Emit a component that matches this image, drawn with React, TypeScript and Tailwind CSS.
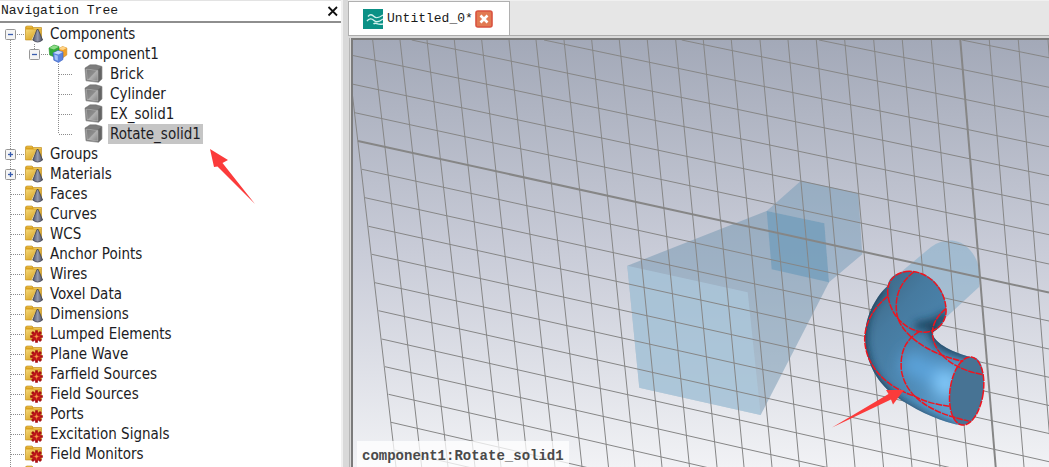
import React, { useState } from 'react';

type IconKind = 'folder' | 'source' | 'group' | 'solid';
type Guide = 'line' | 'blank' | 'first' | 'tee' | 'end';

interface TreeNode {
  label: string;
  icon: IconKind;
  guides: Guide[];
  toggle?: 'open' | 'closed';
}

const NODES: TreeNode[] = [
  { label: 'Components', icon: 'folder', guides: ['first'], toggle: 'open' },
  { label: 'component1', icon: 'group', guides: ['line', 'end'], toggle: 'open' },
  { label: 'Brick', icon: 'solid', guides: ['line', 'blank', 'tee'] },
  { label: 'Cylinder', icon: 'solid', guides: ['line', 'blank', 'tee'] },
  { label: 'EX_solid1', icon: 'solid', guides: ['line', 'blank', 'tee'] },
  { label: 'Rotate_solid1', icon: 'solid', guides: ['line', 'blank', 'end'] },
  { label: 'Groups', icon: 'folder', guides: ['tee'], toggle: 'closed' },
  { label: 'Materials', icon: 'folder', guides: ['tee'], toggle: 'closed' },
  { label: 'Faces', icon: 'folder', guides: ['tee'] },
  { label: 'Curves', icon: 'folder', guides: ['tee'] },
  { label: 'WCS', icon: 'folder', guides: ['tee'] },
  { label: 'Anchor Points', icon: 'folder', guides: ['tee'] },
  { label: 'Wires', icon: 'folder', guides: ['tee'] },
  { label: 'Voxel Data', icon: 'folder', guides: ['tee'] },
  { label: 'Dimensions', icon: 'folder', guides: ['tee'] },
  { label: 'Lumped Elements', icon: 'source', guides: ['tee'] },
  { label: 'Plane Wave', icon: 'source', guides: ['tee'] },
  { label: 'Farfield Sources', icon: 'source', guides: ['tee'] },
  { label: 'Field Sources', icon: 'source', guides: ['tee'] },
  { label: 'Ports', icon: 'source', guides: ['tee'] },
  { label: 'Excitation Signals', icon: 'source', guides: ['tee'] },
  { label: 'Field Monitors', icon: 'source', guides: ['tee'] },
  { label: '', icon: 'source', guides: ['tee'] },
];

// Working plane, rows as [x1, y1, y at the right edge]
const ROWS: [number, number, number][] = [
  [962, 40, 57.7], [819, 40, 87.3], [681.7, 40, 117], [544, 40, 146.7], [411.7, 40, 175.7],
  [352, 55.3, 205], [352, 84, 234.7], [354, 112.5, 264], [358, 141, 292.5], [362, 169.3, 321],
  [365, 197.7, 349], [368.5, 226.3, 377.3], [371.8, 254.3, 405.5], [375, 282.7, 433.5],
  [378.5, 310.7, 461.7], [381.7, 339, 490], [385, 366.7, 518], [388.5, 394.3, 546],
  [391, 422.3, 574], [394.6, 450, 602],
];

// Columns as [x at the top, x at the bottom]
const COLS: [number, number][] = [
  [346, 396], [372.7, 421.7], [400, 448], [427, 475], [454.3, 501], [481.7, 528], [509, 555],
  [536, 582], [564, 608.5], [591.7, 635], [619.3, 662], [647.3, 689.5], [675.7, 717],
  [703.3, 744], [731.3, 772], [760, 799.5], [788, 827], [816.3, 855], [844.7, 883.5],
  [873.7, 912], [902.3, 940], [931.3, 967.7], [960.3, 995.7], [989.3, 1024], [1018.3, 1052],
  [1048, 1080],
];

const MAIN_ROW = 8;
const MAIN_COL = 22;

const BEND =
  'M203 197 C172 226 136 282 135 350 C136 432 176 492 226 528 C280 566 345 598 400 611 C440 625 476 590 489 512 C496 455 484 408 455 412 C405 399 342 372 337 338 C366 322 381 292 378 265 C376 200 326 154 268 154 C236 154 206 170 203 197 Z';

const GuideCell: React.FC<{ kind: Guide; toggle?: 'open' | 'closed' }> = ({ kind, toggle }) => {
  const top = kind === 'line' || kind === 'tee' || kind === 'end';
  const bottom = kind === 'line' || kind === 'tee' || kind === 'first';
  const branch = kind !== 'line' && kind !== 'blank';
  return (
    <svg width="24" height="20" viewBox="0 0 24 20" className="shrink-0" aria-hidden="true">
      <g stroke="#8c8c8c" strokeDasharray="1 1" fill="none">
        {top && <path d="M10.500 0V10" />}
        {bottom && <path d="M10.500 10V20" />}
        {branch && <path d="M11 10.500H24" />}
      </g>
      {toggle && (
        <>
          <rect x="5.500" y="5.500" width="10" height="10" rx="1" fill="#f4f4f4" stroke="#979797" />
          <path d="M8 10.500H13" stroke="#3a5dae" strokeWidth="1.300" />
          {toggle === 'closed' && <path d="M10.500 8V13" stroke="#3a5dae" strokeWidth="1.300" />}
        </>
      )}
    </svg>
  );
};

const Folder: React.FC = () => (
  <>
    <path d="M1.500 15.500V3L2.500 2H8L9.500 3.500H17.500V16H1.500Z" fill="#d9a01c" stroke="#c08f22" strokeWidth=".6" />
    <path d="M2 5.500H17V15.500H2Z" fill="url(#folderFront)" />
    <path d="M2.500 3H8M9.500 4.500H17" stroke="#f3cd62" strokeWidth=".8" />
  </>
);

const NodeIcon: React.FC<{ kind: IconKind }> = ({ kind }) => (
  <svg width="20" height="20" viewBox="0 0 20 20" className="shrink-0" aria-hidden="true">
    {kind === 'folder' && (
      <>
        <Folder />
        <path d="M11 9L7.500 15.500L10 17.500Z" fill="#f6f0dd" opacity=".8" />
        <path d="M13 5.500L8.800 16Q13.500 20 18.600 16L14.200 5.500Z" fill="url(#cone)" stroke="#3e4150" strokeWidth=".8" />
      </>
    )}
    {kind === 'source' && (
      <>
        <Folder />
        <g stroke="#a80f14" strokeWidth="2.700">
          <path d="M12.500 6.200V18.800M6.200 12.500H18.800M8 8L17 17M17 8L8 17" />
        </g>
        <circle cx="12.500" cy="12.500" r="4.300" fill="#bd1519" />
        <path d="M12.500 9.500V15.500M9.500 12.500H15.500" stroke="#e0602a" strokeWidth=".8" />
        <circle cx="12.500" cy="12.500" r="1.300" fill="#f3a04a" />
      </>
    )}
    {kind === 'group' && (
      <>
        <path d="M10.500 5L14.500 2.500L18.800 4V11L14.500 14L10.500 12Z" fill="#f0a02a" stroke="#cf8a1c" strokeWidth=".6" />
        <path d="M10.500 5L14.500 2.500L18.800 4L15 6Z" fill="#ffd487" />
        <path d="M1 4L6 1L11 2.500V9L6.500 13L1.700 11Z" fill="#33ab38" stroke="#23902a" strokeWidth=".6" />
        <path d="M1.200 4L6 5.500L10.800 2.700L6 1.200Z" fill="#8edc88" />
        <path d="M5 9L10 6.500L15 8V15.500L10.500 18.500L5.800 16.200Z" fill="#5c84dc" stroke="#3c62c4" strokeWidth=".6" />
        <path d="M5.200 9L10 6.700L14.800 8L10.500 10.500Z" fill="#c6d9ff" />
        <path d="M6.400 10.600L9.800 11.700V16.700L6.900 15.400Z" fill="#a3c0f7" />
      </>
    )}
    {kind === 'solid' && (
      <>
        <path d="M1 4L6 .8H12L18 2.500V15L14.500 18.300L2 16.800Z" fill="#646464" stroke="#8f8f8f" strokeWidth=".7" />
        <path d="M1.500 4.300L6.200 1.300H12L17.500 2.800L14 5.800Z" fill="#7c7c7c" />
        <path d="M2.300 5L13.800 6.400V17L3 15.700Z" fill="url(#solidFront)" stroke="#bdbdbd" strokeWidth=".6" />
      </>
    )}
  </svg>
);

const NavigationTree: React.FC = () => {
  const [selected, setSelected] = useState('Rotate_solid1');

  return (
    <aside className="w-[343px] shrink-0 flex flex-col pr-0.5 bg-[#f0f0f0] overflow-hidden">
      <header className="h-[23px] shrink-0 flex items-end justify-between border-t border-t-[#e3e3e3] border-b-2 border-b-[#8e8e8e] bg-white pl-px pr-0.5 font-['Liberation_Mono',monospace]">
        <h2 className="text-[13px] leading-5 text-[#1a1a1a]">Navigation Tree</h2>
        <button aria-label="Close navigation tree" className="w-3 h-3 mb-1">
          <svg width="12" height="12" viewBox="0 0 12 12">
            <path d="M1.500 2L10 10.500M10 2L1.500 10.500" stroke="#111" strokeWidth="1.800" />
          </svg>
        </button>
      </header>
      <ul className="flex-1 pt-px bg-white font-['DejaVu_Sans_Condensed','DejaVu_Sans',sans-serif] text-[15px] text-[#1c1c24]">
        {NODES.map((node, i) => (
          <li key={i} className="flex h-5 items-center">
            {node.guides.map((g, j) => (
              <GuideCell key={j} kind={g} toggle={j === node.guides.length - 1 ? node.toggle : undefined} />
            ))}
            {node.icon === 'solid' && <span className="w-3 shrink-0" />}
            <NodeIcon kind={node.icon} />
            <button
              onClick={() => setSelected(node.label)}
              className={
                selected === node.label
                  ? 'ml-1 px-0.5 h-5 leading-5 whitespace-nowrap bg-[#c5c5c5]'
                  : 'ml-1 px-0.5 h-5 leading-5 whitespace-nowrap'
              }
            >
              {node.label}
            </button>
          </li>
        ))}
      </ul>
    </aside>
  );
};

const Scene: React.FC = () => (
  <svg viewBox="353 40 696 427" preserveAspectRatio="xMinYMin slice" className="block w-full h-full" role="img" aria-label="3D view">
    <defs>
      <linearGradient id="pipe" x1="140" y1="260" x2="440" y2="520" gradientUnits="userSpaceOnUse">
        <stop offset="0" stopColor="#3f6c8c" />
        <stop offset=".2" stopColor="#467a9f" />
        <stop offset=".6" stopColor="#4c86b0" />
        <stop offset="1" stopColor="#5c9dce" />
      </linearGradient>
      <clipPath id="bendClip"><path d={BEND} /></clipPath>
      <filter id="soft" x="-50%" y="-50%" width="200%" height="200%"><feGaussianBlur stdDeviation="13" /></filter>
      <filter id="softer" x="-80%" y="-80%" width="260%" height="260%"><feGaussianBlur stdDeviation="24" /></filter>
    </defs>

    {/* horn and waveguide */}
    <path d="M766.700 211L801 180.700L858.300 193.300L862.300 254.300L829 282.300L824.300 223.300Z" fill="#7199b6" opacity=".48" />
    <path d="M627.300 265.700L766.700 211L824.300 223.300L829 282.300L760.700 415L639.300 387.700Z" fill="#6d93ad" opacity=".48" />
    <path d="M627.300 265.700L747.700 292.300L760.700 415L639.300 387.700Z" fill="#adcbde" opacity=".65" />
    <path d="M766.700 211L824.300 223.300L829 282.300L771.700 269.300Z" fill="#6e9bba" opacity=".7" />
    {/* cylinder */}
    <path d="M901 272L931 247C944 238 958 239 967 247C977 256 982 270 979 287L940 323Z" fill="#8fb2cc" opacity=".68" />

    <g stroke="#868686" fill="none">
      {ROWS.map(([x, y, right], i) => (
        <line key={i} x1={x} y1={y} x2="1049" y2={right} strokeWidth={i === MAIN_ROW ? 2 : 1} />
      ))}
      {COLS.map(([top, bottom], i) => (
        <line key={i} x1={top} y1="40" x2={bottom} y2="467" strokeWidth={i === MAIN_COL ? 2 : 1} />
      ))}
    </g>

    {/* selected bend */}
    <g transform="translate(820 220) scale(.33333)" fill="none">
      <path d={BEND} fill="url(#pipe)" />
      <g clipPath="url(#bendClip)">
        <g filter="url(#soft)">
          <path d="M185 200C120 270 108 360 145 445C185 535 280 590 410 632" stroke="#16364d" strokeWidth="28" />
          <path d="M285 318C325 318 352 305 385 285" stroke="#1b3d56" strokeWidth="26" opacity=".9" />
          <path d="M340 318C335 372 400 396 465 402" stroke="#1b3d56" strokeWidth="28" />
        </g>
        <g filter="url(#softer)">
          <path d="M250 420L400 490" stroke="#5ba3da" strokeWidth="70" />
          <ellipse cx="378" cy="492" rx="34" ry="40" fill="#86ceff" />
        </g>
      </g>
      <ellipse cx="440" cy="513" rx="50" ry="103" transform="rotate(8 440 513)" fill="#477394" />
      <g stroke="#f0141e" strokeWidth="4.500" strokeDasharray="20 3">
        <ellipse cx="440" cy="513" rx="50" ry="103" transform="rotate(8 440 513)" />
        <path d="M268 154C228 154 202 182 203 215C206 285 258 334 315 337C358 334 381 302 378 265C374 205 326 154 268 154Z" />
        <path d="M281 156C240 188 222 230 231 285C242 338 315 400 430 424" />
        <path d="M378 266C346 290 331 325 340 358C350 410 415 452 490 464" />
        <path d="M203 229C164 260 134 306 134 360C138 445 205 503 285 529C320 548 355 554 388 559" />
        <path d="M298 334C254 362 240 398 244 450C256 530 330 578 446 603" />
      </g>
    </g>
    <path d="M904 390L886 390L888.500 394L832 427.500L891 399.500L893 404.500Z" fill="#fb3b3b" />
  </svg>
);

const App: React.FC = () => (
  <div className="relative flex h-screen overflow-hidden bg-[#d9d9d9]">
    {/* shared icon gradients */}
    <svg width="0" height="0" className="absolute" aria-hidden="true">
      <defs>
        <linearGradient id="folderFront" x1="0" y1="0" x2="1" y2="1">
          <stop offset="0" stopColor="#f5d878" />
          <stop offset="1" stopColor="#d0940c" />
        </linearGradient>
        <linearGradient id="cone">
          <stop offset="0" stopColor="#50546a" />
          <stop offset=".5" stopColor="#9499ae" />
          <stop offset="1" stopColor="#484b5a" />
        </linearGradient>
        <linearGradient id="solidFront" x1="0" y1="0" x2="1" y2="1">
          <stop offset="0" stopColor="#7c7c7c" />
          <stop offset=".48" stopColor="#8c8c8c" />
          <stop offset=".55" stopColor="#b0b0b0" />
          <stop offset="1" stopColor="#858585" />
        </linearGradient>
      </defs>
    </svg>

    <NavigationTree />

    <main className="flex-1 min-w-0 flex flex-col ml-[5px]">
      <div className="h-9 shrink-0 flex items-end bg-[#e6e6e6] border-t border-t-[#f0f0f0] border-b border-b-[#acacac]">
        <div className="w-[162px] h-[34px] flex items-center pl-3.5 bg-white border border-b-0 border-[#b0b0b0]">
          <svg width="20" height="20" viewBox="0 0 20 20" className="shrink-0" aria-hidden="true">
            <rect width="20" height="20" fill="#0b9186" />
            <g fill="none" stroke="#d4f2ee" strokeWidth="1.400">
              <path d="M5 7.500C7 5 9 5.500 11 7.500S15 9.500 20 6" />
              <path d="M4 12C6 9.500 8.500 9 11 11.500S16 13 20 10" />
              <path d="M10.500 15C13 12.500 14 16.500 20 15" />
            </g>
          </svg>
          <span className="ml-1 font-['Liberation_Mono',monospace] text-[13px] leading-5 text-[#1a1a1a]">Untitled_0*</span>
          <button aria-label="Close tab" className="ml-0.5 w-[18px] h-[18px]">
            <svg width="18" height="18" viewBox="0 0 18 18">
              <rect x="1" y="1" width="16" height="16" rx="2" fill="#e27a52" stroke="#d95340" strokeWidth="1.600" />
              <path d="M5.500 5.500L12.500 12.500M12.500 5.500L5.500 12.500" stroke="#fff" strokeWidth="2.600" />
            </svg>
          </button>
        </div>
      </div>
      <div className="flex-1 min-h-0 flex mt-0.5 ml-px border-l border-l-[#b5b5b5] pl-px">
        <div className="relative flex-1 min-w-0 border-t-2 border-l-2 border-[#7b7b7b] bg-linear-to-b from-[#a3a9b8] via-[#c9ccd8] to-[#f1f2f5]">
          <Scene />
          <div className="absolute left-1 bottom-0 h-[26px] px-[5px] bg-white/75 font-['Liberation_Mono',monospace] text-[14px] leading-[30px] font-bold text-[#4a4a4a]">
            component1:Rotate_solid1
          </div>
        </div>
      </div>
    </main>

    {/* pointer to the selected solid */}
    <svg width="46" height="56" viewBox="210 149 46 56" className="absolute left-[210px] top-[149px] pointer-events-none" aria-hidden="true">
      <path d="M210 149L228 160L222.500 163L255 204L217.500 166.500L214 167Z" fill="#fb3b3b" />
    </svg>
  </div>
);

export default App;
